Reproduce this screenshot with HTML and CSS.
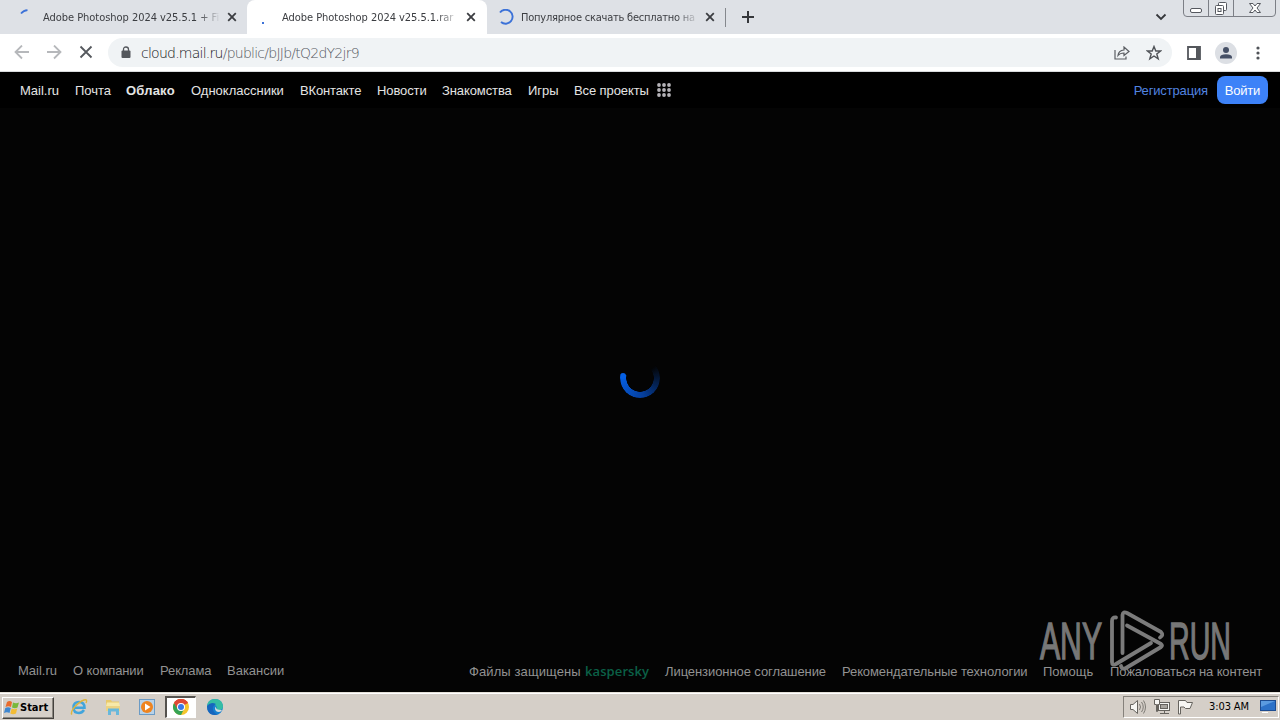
FILE: index.html
```html
<!DOCTYPE html>
<html lang="ru">
  <head>
    <meta charset="UTF-8" />
    <meta name="viewport" content="width=device-width, initial-scale=1.0" />
    <title>Adobe Photoshop 2024 v25.5.1.rar</title>
    <link rel="stylesheet" href="styles.css">
  </head>
  <body>
    <!-- tabs -->
    <div class="tabs">
      <div class="tab first">
        <svg class="spin" width="16" height="16" viewBox="0 0 16 16"><path d="M2 4.500Q4.500 1.500 8.500 1.200" fill="none" stroke="#3c72d8" stroke-width="1.800"/></svg>
        <span class="tabname">Adobe Photoshop 2024 v25.5.1 + Fix</span>
        <svg class="close" width="10" height="10" viewBox="0 0 10 10"><path d="M1.200 1.200L8.800 8.800M8.800 1.200L1.200 8.800"/></svg>
      </div>
      <div class="tab active">
        <svg class="spin" width="16" height="16" viewBox="0 0 16 16"><rect x="4" y="13" width="2" height="2" fill="#3c72d8"/></svg>
        <span class="tabname">Adobe Photoshop 2024 v25.5.1.rar</span>
        <svg class="close" width="10" height="10" viewBox="0 0 10 10"><path d="M1.200 1.200L8.800 8.800M8.800 1.200L1.200 8.800"/></svg>
      </div>
      <div class="tab last">
        <svg class="spin" width="16" height="16" viewBox="0 0 16 16"><path d="M2 3.500A7 7 0 1 1 3 13" fill="none" stroke="#3c72d8" stroke-width="1.900"/></svg>
        <span class="tabname cyr">Популярное скачать бесплатно на</span>
        <svg class="close" width="10" height="10" viewBox="0 0 10 10"><path d="M1.200 1.200L8.800 8.800M8.800 1.200L1.200 8.800"/></svg>
      </div>
      <svg class="plus" width="12" height="12" viewBox="0 0 12 12"><path d="M6 0V12M0 6H12" stroke="#35373b" stroke-width="2"/></svg>
      <svg class="down" width="12" height="8" viewBox="0 0 12 8"><path d="M1.500 1.500L6 6L10.500 1.500" fill="none" stroke="#35373b" stroke-width="1.800"/></svg>
      <svg class="winbtns" width="94" height="17" viewBox="0 0 94 17">
        <path d="M.5 0V13Q.5 16.500 4 16.500H89Q92.500 16.500 92.500 13V0M25.500 0V16.500M50.500 0V16.500" fill="none" stroke="#7c7f86"/>
        <rect x="7.500" y="8.500" width="11" height="4" rx="1.500" fill="#fff" stroke="#55585f"/>
        <rect x="35.500" y="2.500" width="8" height="8" rx="1" fill="#fff" stroke="#55585f"/>
        <rect x="32.500" y="5.500" width="8" height="9" rx="1" fill="#fff" stroke="#55585f"/>
        <rect x="35" y="8.500" width="3" height="3" fill="none" stroke="#55585f"/>
        <path d="M66.500 3.500H70L72 6L74 3.500H77.500L74 8L77.500 12.500H74L72 10L70 12.500H66.500L70 8Z" fill="#fff" stroke="#55585f"/>
      </svg>
    </div>

    <!-- address bar -->
    <div class="toolbar">
      <svg class="nav" width="80" height="16" viewBox="0 0 80 16" fill="none" stroke-width="1.800">
        <path d="M15 7H2M8 .5L1.500 7L8 13.500M33 7H46M40 .5L46.500 7L40 13.500" stroke="#b6b8bb"/>
        <path d="M66.500 1.500L77.500 12.500M77.500 1.500L66.500 12.500" stroke="#55585d"/>
      </svg>
      <div class="address">
        <svg class="lock" width="10" height="12" viewBox="0 0 10 12"><rect x=".5" y="4.500" width="9" height="7.500" rx="1" fill="#54575c"/><path d="M2.500 5V3.500Q2.500 1 5 1T7.500 3.500V5" fill="none" stroke="#54575c" stroke-width="1.300"/></svg>
        <p class="url"><span class="host">cloud.mail.ru</span>/public/bJJb/tQ2dY2jr9</p>
        <svg class="share" width="16" height="14" viewBox="0 0 16 14" fill="none" stroke="#5b5e63" stroke-width="1.200"><path d="M1 4V13H12V10.500M4 9.500Q4.500 4.500 10 4V1L15 5.500L10 9.500V7Q6 7 4 9.500Z"/></svg>
        <svg class="star" width="16" height="16" viewBox="0 0 16 16"><path d="M8 1.500L9.800 6H14.600L10.800 9L12.200 13.900L8 11L3.800 13.900L5.200 9L1.400 6H6.200Z" fill="none" stroke="#505358" stroke-width="1.400"/></svg>
      </div>
      <svg class="panel" width="14" height="14" viewBox="0 0 14 14"><path d="M1 1H13V13H1Z" fill="none" stroke="#54575c" stroke-width="1.800"/><path d="M9 1H13V13H9Z" fill="#54575c"/></svg>
      <svg class="user" width="22" height="22" viewBox="0 0 22 22"><circle cx="11" cy="11" r="11" fill="#dcdfe4"/><circle cx="11" cy="8" r="3" fill="#465066"/><path d="M5 16.500V15Q5.500 12.300 11 12.300T17 15V16.500Z" fill="#465066"/></svg>
      <svg class="dots" width="4" height="14" viewBox="0 0 4 14" fill="#505358"><circle cx="2" cy="2" r="1.600"/><circle cx="2" cy="7" r="1.600"/><circle cx="2" cy="12" r="1.600"/></svg>
    </div>

    <div class="page">
      <div class="menu">
        <a class="mail">Mail.ru</a>
        <a class="pochta">Почта</a>
        <a class="cloud">Облако</a>
        <a class="ok">Одноклассники</a>
        <a class="vk">ВКонтакте</a>
        <a class="news">Новости</a>
        <a class="dating">Знакомства</a>
        <a class="games">Игры</a>
        <a class="all">Все проекты</a>
        <svg width="14" height="14" viewBox="0 0 14 14" fill="#b5b3b8"><circle cx="2" cy="2" r="1.900"/><circle cx="7" cy="2" r="1.900"/><circle cx="12" cy="2" r="1.900"/><circle cx="2" cy="7" r="1.900"/><circle cx="7" cy="7" r="1.900"/><circle cx="12" cy="7" r="1.900"/><circle cx="2" cy="12" r="1.900"/><circle cx="7" cy="12" r="1.900"/><circle cx="12" cy="12" r="1.900"/></svg>
        <a class="reg">Регистрация</a>
        <a class="login">Войти</a>
      </div>

      <div class="content">
        <div class="loader"><div class="dot"></div></div>
      </div>

      <div class="footer">
        <div class="links">
          <a class="fmail">Mail.ru</a>
          <a class="about">О компании</a>
          <a class="ads">Реклама</a>
          <a class="jobs">Вакансии</a>
        </div>
        <div class="links right">
          <a class="files">Файлы защищены</a>
          <b class="kaspersky">kaspersky</b>
          <a class="license">Лицензионное соглашение</a>
          <a class="rec">Рекомендательные технологии</a>
          <a class="help">Помощь</a>
          <a class="report">Пожаловаться на контент</a>
        </div>
      </div>
    </div>

    <!-- watermark over the page -->
    <svg class="anyrun" width="196" height="66" viewBox="0 0 196 66">
      <g class="word">
        <text x="2" y="51" textLength="62" lengthAdjust="spacingAndGlyphs">ANY</text>
        <text x="131" y="51" textLength="62" lengthAdjust="spacingAndGlyphs">RUN</text>
      </g>
      <g fill="none" stroke="#7b7b7b" stroke-width="3.800" stroke-linejoin="round" stroke-linecap="round">
        <path d="M78 9.500Q74 9 74 13V54Q74 58 78 56L113 35"/>
        <path d="M84.500 45V7Q85 3 89 5L123 24Q126 27 122 29.500"/>
        <path d="M89 17.500L123 36Q125 37.500 123 39L88 60Q84 62 83 58"/>
      </g>
    </svg>

    <!-- taskbar -->
    <div class="taskbar">
      <div class="startbtn">
        <svg width="16" height="16" viewBox="0 0 16 16"><path d="M3 2Q5.500 0 8 2L7 7Q4.500 5.500 1.500 7Z" fill="#e96b2c"/><path d="M9 2.500Q12 4 15 2.500L13.500 7.500Q11 9 8 7.500Z" fill="#79b83b"/><path d="M1.300 8Q4 6.500 6.800 8L5.500 13Q3 11.500 0 13Z" fill="#3f87d0"/><path d="M7.700 8.500Q10.500 10 13.200 8.500L12 13.500Q9 15 6.300 13.500Z" fill="#f3bc35"/></svg>
        <b>Start</b>
      </div>
      <svg class="ie" width="18" height="18" viewBox="0 0 18 18"><path d="M14 12Q12 15 9 15Q3.500 15 3.500 9.500T9 4T14.500 9.800H4" fill="none" stroke="#42a5dc" stroke-width="2.500"/><path d="M2 16.500C-1 14 8 4 14 2Q18 1 16 5" fill="none" stroke="#dfb53c" stroke-width="1.400"/></svg>
      <svg class="folder" width="16" height="16" viewBox="0 0 16 16"><path d="M1 1H6L7 2.500H14V12H1Z" fill="#e8c96c"/><path d="M2 3.500H14L15 7H1Z" fill="#f7e9a9"/><path d="M1 7H15V12H1Z" fill="#ecd384"/><path d="M3 16V9.500H14V16H11V12.500H6V16Z" fill="#68b8db"/></svg>
      <svg class="media" width="16" height="16" viewBox="0 0 16 16"><rect x=".5" y=".5" width="15" height="15" fill="#b8d2e8" stroke="#6b9bc5"/><circle cx="8" cy="8" r="6" fill="#ee8420"/><path d="M6 4.500L11.500 8L6 11.500Z" fill="#fff"/></svg>
      <div class="chrome">
        <svg width="16" height="16" viewBox="0 0 16 16"><circle cx="8" cy="8" r="8" fill="#f5c52c"/><path d="M8 8L1.070 4A8 8 0 0 1 14.930 4Z" fill="#df4936"/><path d="M8 8H4L1.070 4A8 8 0 0 0 8 16L11 10Z" fill="#35a354"/><path d="M8 4H14.930A8 8 0 0 0 1.070 4L4.500 10Z" fill="#df4936"/><circle cx="8" cy="8" r="4" fill="#fff"/><circle cx="8" cy="8" r="3" fill="#3979e8"/></svg>
      </div>
      <svg class="edge" width="16" height="16" viewBox="0 0 16 16"><circle cx="8" cy="8" r="8" fill="#1680d0"/><path d="M0 7Q1 0 8 0Q15 0 16 7Q16 11 12 11H9Q11 8 8 6Q4 3 0 7Z" fill="#35bda4"/><path d="M0 7Q4 2 9 5Q5 7 6 11Q8 16 12 15Q3 18 .5 11Z" fill="#1766bd"/><path d="M9 7.500Q8 11 15 11Q14 13 12 13Q8 13 8 9Z" fill="#d5dbdd"/></svg>
      <div class="tray">
        <svg width="66" height="16" viewBox="0 0 66 16" fill="#f7f6f3" stroke="#66635e">
          <path d="M.5 5.500H3L7.500 1.500V14.500L3 10.500H.5Z"/><path d="M9.500 5Q11.500 8 9.500 11M11.500 3Q15 8 11.500 13M13.500 1.500Q17.500 8 13.500 14.500" fill="none" stroke-width=".8"/>
          <rect x="28.500" y="3.500" width="11" height="8"/><rect x="30.500" y="5.500" width="7" height="4" fill="#a9a59f"/><path d="M30 14.500H39M34.500 12V14"/><path d="M24.500 .5H29.500V5.500H27.500V12.500H26.500V5.500H24.500Z"/>
          <path d="M48.500 15V1.500H55.500L57 3.500H62.500L60 9.500H55.500L54 8H50.500V15Z"/>
        </svg>
        <span class="time">3:03 AM</span>
        <svg class="desk" width="16" height="13" viewBox="0 0 16 13"><rect x=".5" y=".5" width="15" height="10" fill="#2d72c8" stroke="#1d4c91"/><path d="M1 1H15L1 7Z" fill="#5b9be0"/><path d="M2 12.500H8" stroke="#fff"/></svg>
      </div>
    </div>
  </body>
</html>
```
FILE: styles.css
```css
* {
  box-sizing: border-box;
}

body {
  margin: 0;
  width: 1280px;
  height: 720px;
  overflow: hidden;
  display: flex;
  flex-direction: column;
  font-family: "Liberation Sans", Arial, sans-serif;
  background-color: #040404;
}

svg {
  display: block;
  flex: none;
}

/* browser tabs */
.tabs {
  display: flex;
  height: 34px;
  background-color: #dee1e6;
}
.tab {
  display: flex;
  align-items: center;
  height: 34px;
  width: 240px;
  padding-left: 11px;
}
.first {
  width: 247px;
  padding-left: 19px;
}
.active {
  background-color: #fff;
  border-radius: 8px 8px 0 0;
}
.last {
  width: 239px;
  position: relative;
}
.last::after {
  content: "";
  position: absolute;
  right: 0;
  top: 8px;
  width: 1px;
  height: 19px;
  background-color: #85888d;
}
.tabname {
  width: 176px;
  margin-left: 8px;
  padding-top: 1px;
  font-family: "DejaVu Sans Condensed", "DejaVu Sans", sans-serif;
  font-size: 11px;
  line-height: 16px;
  letter-spacing: -0.04px;
  color: #3b3d41;
  white-space: nowrap;
  overflow: hidden;
  -webkit-mask-image: linear-gradient(to right, #000 155px, transparent 178px);
  mask-image: linear-gradient(to right, #000 155px, transparent 178px);
}
.cyr {
  margin-left: 7px;
  letter-spacing: -0.22px;
}
.close {
  margin-left: 8px;
  fill: none;
  stroke: #3b3d41;
  stroke-width: 1.8;
}
.plus {
  margin: 11px 0 0 16px;
}
.down {
  margin: 13px 0 0 401px;
}
.winbtns {
  margin-left: 16px;
}

/* toolbar */
.toolbar {
  display: flex;
  align-items: center;
  height: 38px;
  padding-left: 14px;
  background-color: #fff;
  border-bottom: 1px solid #d8dadd;
}
.address {
  display: flex;
  align-items: center;
  width: 1064px;
  height: 29px;
  margin-left: 14px;
  padding: 0 10px 0 13px;
  border-radius: 15px;
  background-color: #f0f3f5;
}
.lock {
  margin-top: -2px;
}
.url {
  margin: 0 0 0 10px;
  font-family: "DejaVu Sans", sans-serif;
  font-weight: 200;
  font-size: 14px;
  letter-spacing: -0.75px;
  color: #54585e;
}
.host {
  color: #101214;
}
.share {
  margin-left: auto;
  margin-right: 16px;
}
.panel {
  margin-left: 15px;
}
.user {
  margin-left: 14px;
}
.dots {
  margin-left: 19px;
}

/* mail.ru page */
.page {
  display: flex;
  flex-direction: column;
  height: 620px;
}
.menu {
  display: flex;
  align-items: center;
  height: 36px;
  padding: 0 12px 0 20px;
  background-color: #000;
  font-size: 13px;
  color: #e4e4e4;
}
.menu a,
.links a {
  white-space: nowrap;
}
.mail {
  width: 55px;
}
.pochta {
  width: 51px;
}
.cloud {
  width: 65px;
  font-weight: bold;
  letter-spacing: 0.2px;
}
.ok {
  width: 109px;
}
.vk {
  width: 77px;
  letter-spacing: -0.15px;
}
.news {
  width: 65px;
  letter-spacing: -0.1px;
}
.dating {
  width: 86px;
  letter-spacing: -0.1px;
}
.games {
  width: 46px;
}
.all {
  width: 83px;
  letter-spacing: -0.1px;
}
.reg {
  margin-left: auto;
  margin-right: 9px;
  letter-spacing: -0.15px;
  color: #5284e0;
}
.login {
  width: 51px;
  height: 28px;
  line-height: 29px;
  text-align: center;
  letter-spacing: -0.2px;
  color: #fff;
  background-color: #3d82f8;
  border-radius: 8px;
}
.content {
  flex: 1;
  display: flex;
  justify-content: center;
  padding-top: 250px;
}
.loader {
  width: 40px;
  height: 40px;
  border-radius: 50%;
  position: relative;
  background: conic-gradient(from 50deg, rgba(0, 80, 210, 0) 0deg, #053f9d 120deg, #0560e5 230deg, transparent 231deg);
  -webkit-mask-image: radial-gradient(circle, transparent 13.500px, #000 14px);
  mask-image: radial-gradient(circle, transparent 13.500px, #000 14px);
}
.dot {
  position: absolute;
  left: 0;
  top: 15px;
  width: 6px;
  height: 6px;
  border-radius: 50%;
  background-color: #0560e5;
}
.footer {
  display: flex;
  height: 42px;
  padding: 12px 18px 0;
  font-size: 13px;
  line-height: 18px;
  color: #929292;
}
.links {
  display: flex;
}
.right {
  margin-left: 185px;
  padding-top: 1px;
}
.fmail {
  width: 55px;
}
.about {
  width: 87px;
  letter-spacing: -0.1px;
}
.ads {
  width: 67px;
  letter-spacing: -0.1px;
}
.jobs {
  width: 57px;
}
.files {
  width: 116px;
  letter-spacing: 0.1px;
}
.kaspersky {
  width: 80px;
  font-family: "Open Sans", sans-serif;
  font-size: 13px;
  line-height: 16px;
  font-weight: 600;
  letter-spacing: 0.1px;
  color: #0b6047;
}
.license {
  width: 177px;
  letter-spacing: -0.08px;
}
.rec {
  width: 201px;
  letter-spacing: -0.1px;
}
.help {
  width: 67px;
}
.report {
  letter-spacing: -0.14px;
}

/* watermark */
.anyrun {
  position: absolute;
  left: 1038px;
  top: 608px;
}
.word {
  font-family: "Liberation Sans Narrow", "Liberation Sans", sans-serif;
  font-size: 52px;
  fill: #777;
  stroke: #777;
  stroke-width: 1.4;
}

/* windows taskbar */
.taskbar {
  display: flex;
  align-items: center;
  height: 28px;
  padding: 0 1px 0 2px;
  background-color: #d5cfc8;
  border-top: 1px solid #e5e1d8;
  box-shadow: inset 0 1px #fff;
}
.startbtn {
  display: flex;
  align-items: center;
  width: 52px;
  height: 22px;
  margin-top: 2px;
  padding-left: 1px;
  font-family: "DejaVu Sans Condensed", sans-serif;
  font-size: 11px;
  border: 1px solid #fff;
  border-right-color: #45423e;
  border-bottom-color: #45423e;
  box-shadow: inset -1px -1px #8b8780;
}
.ie {
  margin-left: 16px;
}
.folder {
  margin-left: 17px;
}
.media {
  margin-left: 18px;
}
.chrome {
  width: 31px;
  height: 22px;
  margin-left: 10px;
  padding: 1px 0 0 6px;
  background-color: #fff;
  border: 1px solid #fff;
  border-left: 2px solid #55524e;
  border-top: 2px solid #55524e;
}
.edge {
  margin-left: 11px;
}
.tray {
  display: flex;
  align-items: center;
  width: 156px;
  height: 22px;
  margin-left: auto;
  padding-left: 6px;
  border: 1px solid #fff;
  border-left-color: #85817b;
  border-top-color: #85817b;
}
.time {
  width: 51px;
  margin-left: 13px;
  font-family: "DejaVu Sans Condensed", sans-serif;
  font-size: 11px;
  letter-spacing: -0.1px;
  white-space: nowrap;
}
```
